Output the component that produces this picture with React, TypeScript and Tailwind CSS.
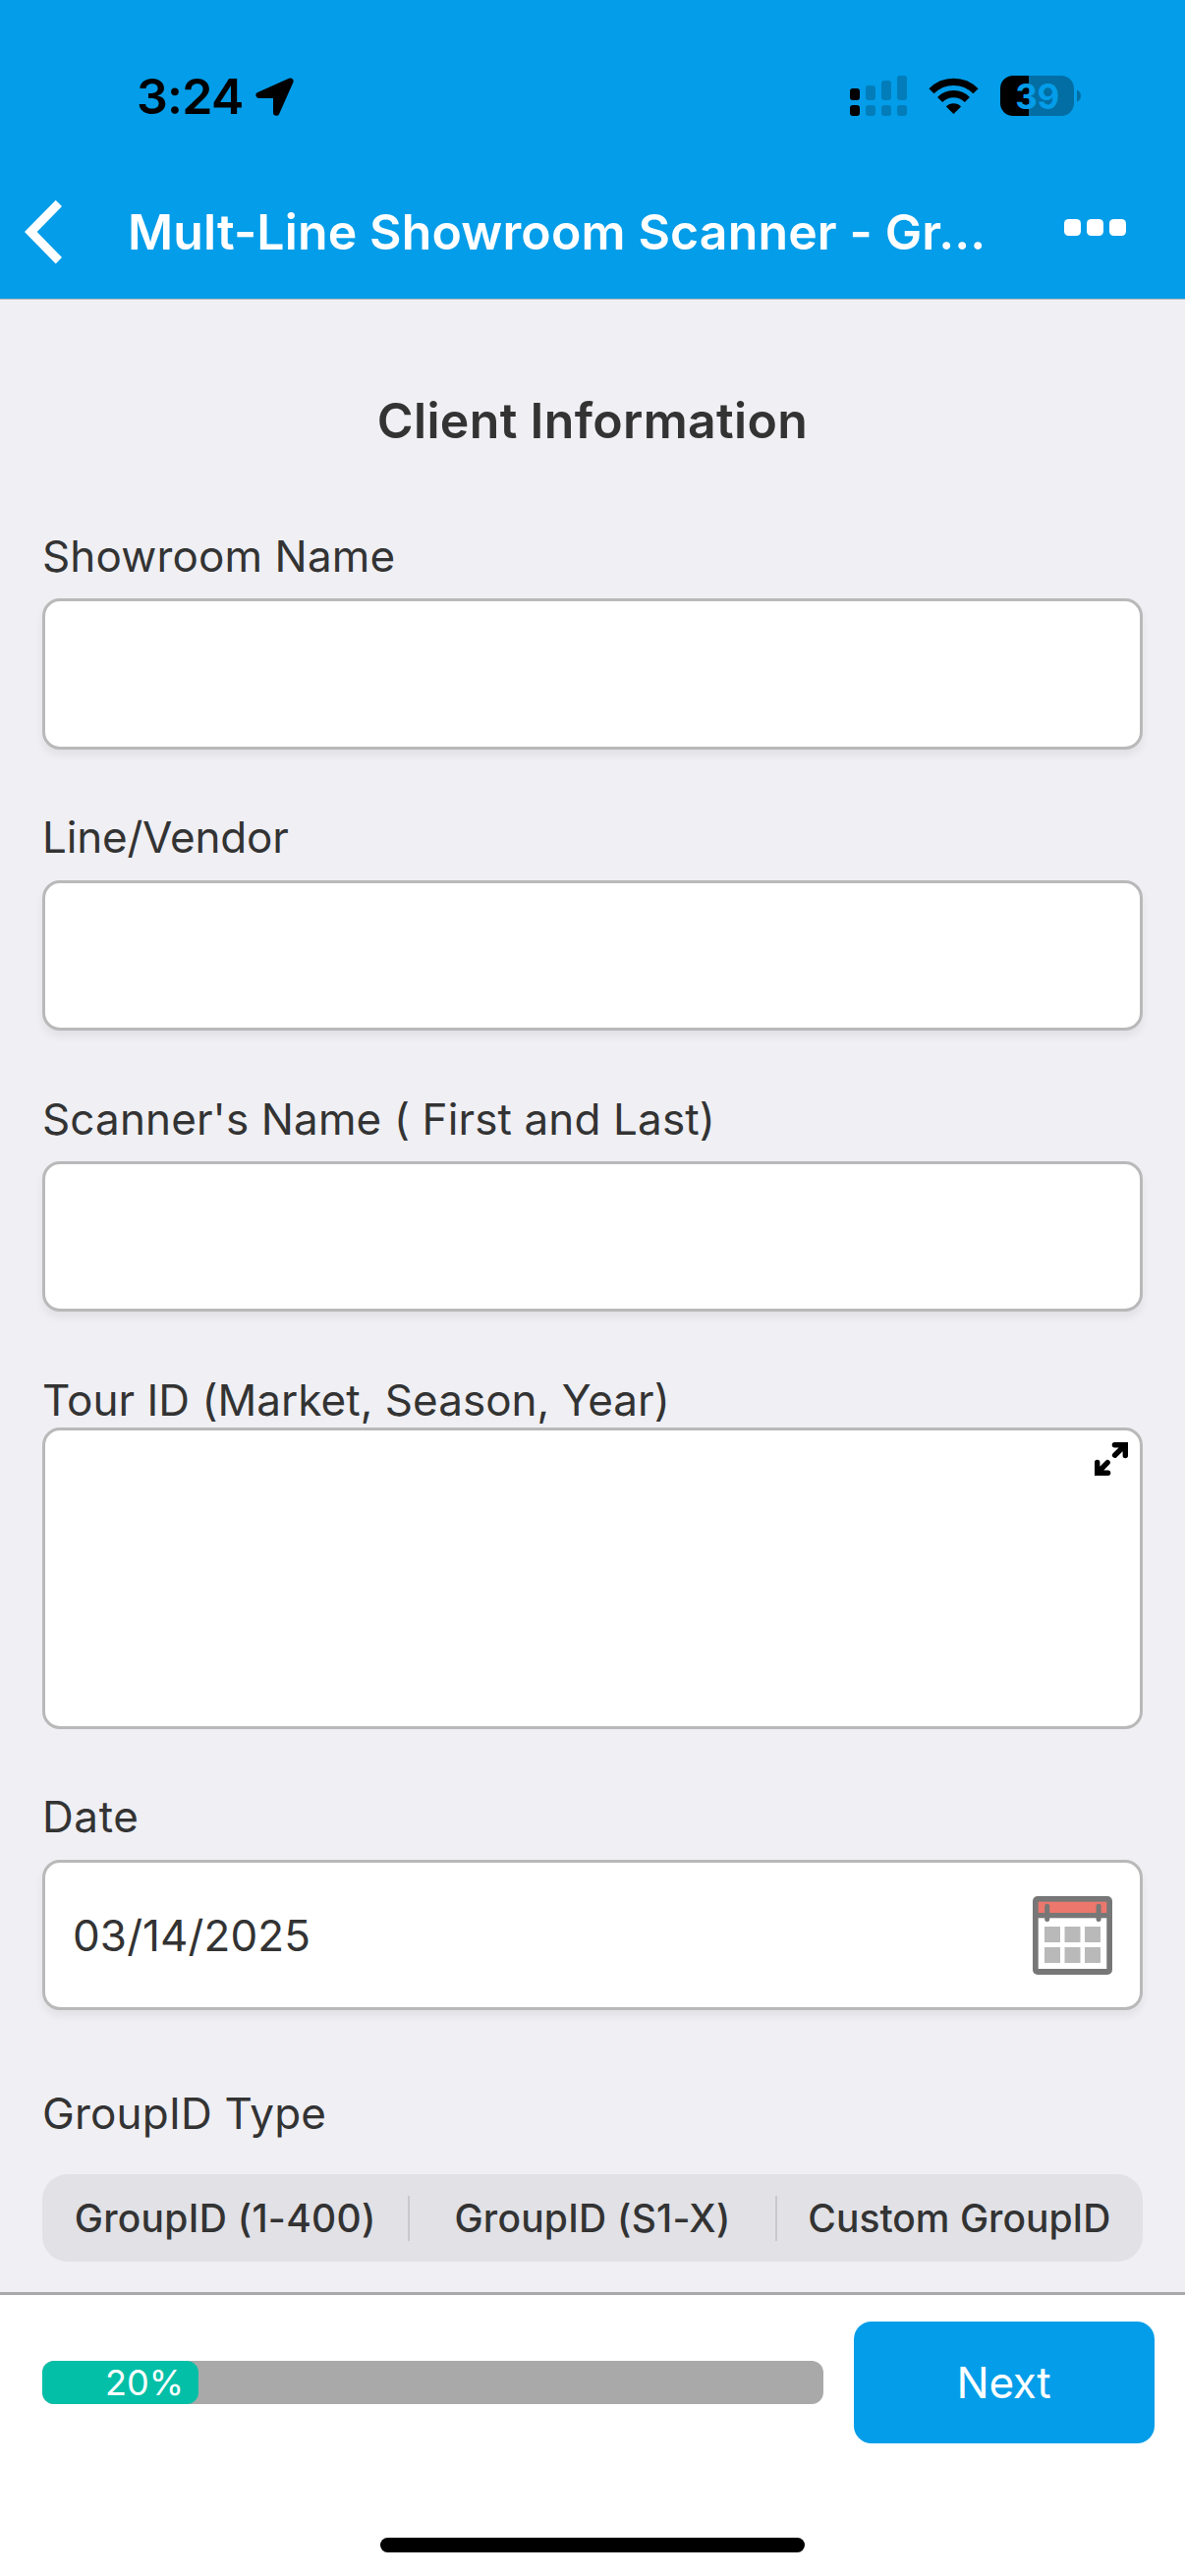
import type { ReactNode } from "react";

function StatusBar() {
  return (
    <div className="flex h-[168px] items-start">
      <div className="ml-[139px] mt-[68px] flex h-[60px] items-start">
        <span className="w-[121px] text-[50px] leading-[60px] font-semibold tracking-[-0.7px] text-black">3:24</span>
        <svg className="mt-[11px] h-[39px] w-[39px]" viewBox="0 0 39 39">
          <path
            d="M35.4 3.6 3.6 17.8H21.2V35.6Z"
            fill="#000"
            stroke="#000"
            strokeWidth="6.4"
            strokeLinejoin="round"
          />
        </svg>
      </div>
      <div className="ml-auto mt-[77px] mr-[106px] flex items-start">
        <svg className="h-[41px] w-[58px]" viewBox="0 0 58 41">
          <rect x="0" y="13" width="10" height="12" rx="3" />
          <rect x="0" y="30" width="10" height="11" rx="3" />
          <g fillOpacity="0.2">
            <rect x="16" y="10" width="10" height="15" rx="3" />
            <rect x="32" y="5" width="10" height="20" rx="3" />
            <rect x="48" y="0" width="10" height="25" rx="3" />
            <rect x="16" y="30" width="10" height="11" rx="3" />
            <rect x="32" y="30" width="10" height="11" rx="3" />
            <rect x="48" y="30" width="10" height="11" rx="3" />
          </g>
        </svg>
        <svg className="mt-[2px] ml-[22px] h-[37px] w-[51px]" viewBox="0 0 51 37">
          <path d="M3 13.8a31.6 31.6 0 0 1 45 0" fill="none" stroke="#000" strokeWidth="7.2" />
          <path d="M11.6 22.5a19.4 19.4 0 0 1 27.8 0" fill="none" stroke="#000" strokeWidth="7.2" />
          <path d="M25.5 37 17.9 29.4a10.8 10.8 0 0 1 15.2 0Z" />
        </svg>
        <div className="ml-[22px] flex h-[41px] w-[75px] items-center justify-center rounded-[13px] bg-[linear-gradient(90deg,#000_29px,#036ea3_29px)] pt-[1px] text-[35px] leading-[41px] font-bold tracking-[-0.4px] text-[#039de9]">
          39
        </div>
        <svg className="mt-[14px] ml-[3px] h-[13px] w-1" viewBox="0 0 4 13">
          <path d="M0 0.5Q4 2.5 4 6.5T0 12.5Z" fill="#036ea3" />
        </svg>
      </div>
    </div>
  );
}

function TitleBar() {
  return (
    <div className="flex h-[136px] items-center">
      <svg className="mb-px ml-[25px] h-[66px] w-[38px]" viewBox="0 0 38 66">
        <path d="M31.7 0.8 38 7.1 12.7 33 38 59.1 31.7 65.4 0 33Z" fill="#fff" />
      </svg>
      <h1 className="ml-[67px] text-[50px] leading-[60px] font-semibold tracking-[0.14px] whitespace-nowrap text-white">
        Mult-Line Showroom Scanner - Gr...
      </h1>
      <div className="mr-[60px] mb-[10px] ml-auto flex gap-[6px]">
        <span className="h-[17px] w-[17px] rounded-[4.5px] bg-white" />
        <span className="h-[17px] w-[17px] rounded-[4.5px] bg-white" />
        <span className="h-[17px] w-[17px] rounded-[4.5px] bg-white" />
      </div>
    </div>
  );
}

function Label({ children, tracking }: { children: ReactNode; tracking: string }) {
  return <div className={"text-[44px] leading-[54px] whitespace-nowrap " + tracking}>{children}</div>;
}

const boxStyle = "rounded-[18px] border-[3px] border-[#b9b9b9] bg-white";
const shadowStyle = "shadow-[0_6px_9px_rgba(0,0,0,0.06)]";

function CalendarIcon() {
  return (
    <svg className="mt-px h-[80px] w-[81px]" viewBox="0 0 81 80">
      <rect width="81" height="80" rx="5" fill="#777" />
      <rect x="5.7" y="5.7" width="69.6" height="11.3" fill="#ec776d" />
      <rect x="5.7" y="22.3" width="69.6" height="51.7" fill="#fff" />
      <g fill="#777">
        <rect x="12.2" y="7.7" width="5" height="18.3" rx="2.5" />
        <rect x="64.6" y="7.7" width="5" height="18.3" rx="2.5" />
      </g>
      <g fill="#b9b9b9">
        <rect x="12" y="31" width="16" height="16" />
        <rect x="32.5" y="31" width="16" height="16" />
        <rect x="53" y="31" width="16" height="16" />
        <rect x="12" y="52" width="16" height="16" />
        <rect x="32.5" y="52" width="16" height="16" />
        <rect x="53" y="52" width="16" height="16" />
      </g>
    </svg>
  );
}

function ExpandIcon() {
  return (
    <svg className="h-[34px] w-[34px]" viewBox="0 0 34 34" fill="none" stroke="#000" strokeWidth="5.4" strokeLinecap="round">
      <path d="M20.4 2.7H31.3V13.6M30.5 3.5 20.6 13.2" />
      <path d="M13.6 31.3H2.7V20.4M3.5 30.5 13.2 20.6" />
    </svg>
  );
}

export default function App() {
  return (
    <div className="flex h-[2622px] w-[1206px] flex-col overflow-hidden bg-[#efeff4] font-['Inter',sans-serif] text-[#333]">
      <header className="h-[305px] shrink-0 border-b border-[#b4b8bc] bg-[#039de9]">
        <StatusBar />
        <TitleBar />
      </header>

      <main className="flex h-[2028px] shrink-0 flex-col px-[43px] pt-[93px]">
        <h2 className="text-center text-[50px] leading-[60px] font-semibold tracking-[0.33px]">Client Information</h2>

        <div className="mt-[81px] flex flex-col">
          <div className="flex flex-col gap-4">
            <Label tracking="tracking-[0.14px]">Showroom Name</Label>
            <div className={"h-[154px] " + boxStyle + " " + shadowStyle} />
          </div>
          <div className="mt-[62px] flex flex-col gap-[17px]">
            <Label tracking="tracking-[-0.2px]">Line/Vendor</Label>
            <div className={"h-[153px] " + boxStyle + " " + shadowStyle} />
          </div>
          <div className="mt-[63px] flex flex-col gap-4">
            <Label tracking="tracking-[0.13px]">Scanner's Name ( First and Last)</Label>
            <div className={"h-[153px] " + boxStyle + " " + shadowStyle} />
          </div>
          <div className="mt-[63px] flex flex-col gap-px">
            <Label tracking="tracking-[0.03px]">Tour ID (Market, Season, Year)</Label>
            <div className={"flex h-[307px] items-start justify-end pt-3 pr-3 " + boxStyle}>
              <ExpandIcon />
            </div>
          </div>
        </div>

        <div className="mt-[62px] flex flex-col gap-[17px]">
          <Label tracking="tracking-[0.6px]">Date</Label>
          <div className={"flex h-[153px] items-center justify-between pr-7 pl-[28px] " + boxStyle + " " + shadowStyle}>
            <span className="text-[44px] leading-[54px] tracking-[0.1px]">03/14/2025</span>
            <CalendarIcon />
          </div>
        </div>

        <div className="mt-[78px] flex flex-col gap-[35px]">
          <Label tracking="tracking-[0.19px]">GroupID Type</Label>
          <div className="grid h-[89px] grid-cols-3 items-center rounded-[26px] bg-[#e1e1e6] text-center text-[39px] leading-[46px] font-medium">
            <div className="-mr-px border-r-[2px] border-[#c9c9cd] tracking-[0.28px]">GroupID (1-400)</div>
            <div className="-mr-px border-r-[2px] border-[#c9c9cd] pl-[1px] tracking-[0.23px]">GroupID (S1-X)</div>
            <div>Custom GroupID</div>
          </div>
        </div>
      </main>

      <footer className="flex grow flex-col border-t-[3px] border-[#a9a9a9] bg-white">
        <div className="mt-[27px] flex h-[124px] items-center pr-[31px] pl-[43px]">
          <div className="h-[44px] w-[795px] rounded-xl bg-[#a9a9a9]">
            <div className="h-[44px] w-1/5 rounded-xl bg-[#03bfa7] pr-[15px] text-right text-[36px] leading-[44px] text-white">
              20%
            </div>
          </div>
          <div className="ml-auto flex h-[124px] w-[306px] items-center justify-center rounded-[18px] bg-[#039de9] pr-[1px] text-[44px] leading-[54px] tracking-[-0.3px] text-white">
            Next
          </div>
        </div>
        <div className="mt-[96px] h-[15px] w-[432px] self-center rounded-full bg-black" />
      </footer>
    </div>
  );
}
